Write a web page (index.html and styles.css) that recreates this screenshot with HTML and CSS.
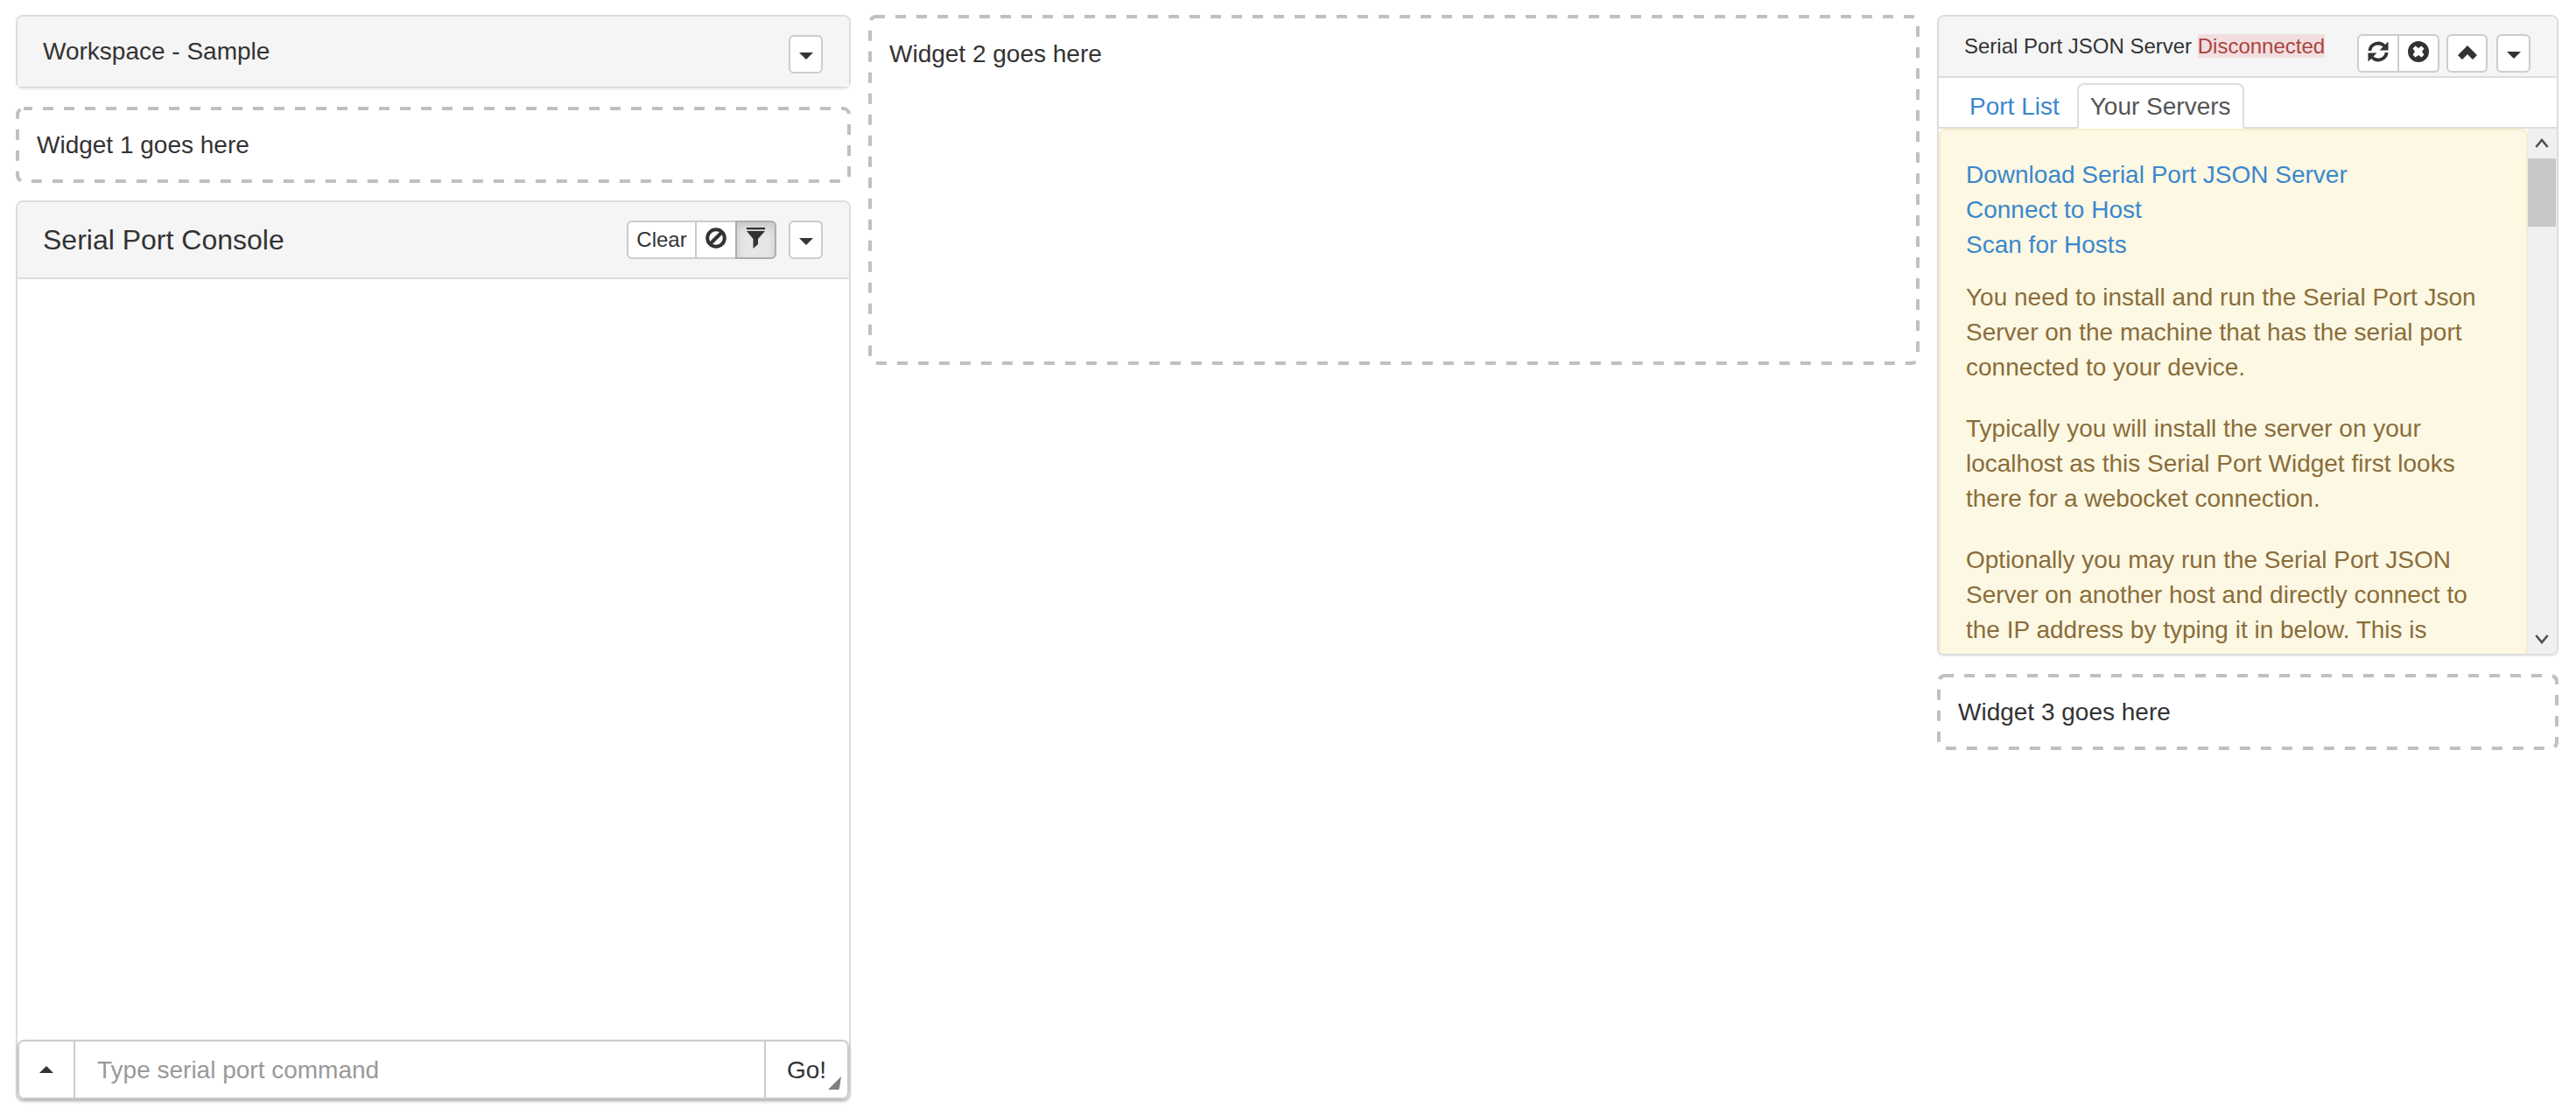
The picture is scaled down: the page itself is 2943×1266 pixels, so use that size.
FILE: index.html
```html
<!DOCTYPE html>
<html lang="en">
<head>
  <meta charset="UTF-8">
  <title>Workspace - Sample</title>
  <link rel="stylesheet" href="styles.css">
</head>
<body>
  <div class="layout">
    <!-- left column -->
    <div class="col">
      <div class="panel">
        <div class="panel-heading heading-workspace">
          <div class="panel-title">Workspace - Sample</div>
          <button class="btn btn-caret btn-low"><span class="caret"></span></button>
        </div>
      </div>
      <div class="placeholder placeholder-one">
        <svg class="dashes"><rect class="dash-rect" x="2" y="2" rx="7"/></svg>
        Widget 1 goes here
      </div>
      <div class="panel panel-console">
        <div class="panel-heading heading-console">
          <div class="panel-title title-console">Serial Port Console</div>
          <div class="btn-group">
            <button class="btn btn-clear">Clear</button>
            <button class="btn btn-icon">
              <svg class="icon" viewBox="0 0 24 24"><circle cx="12" cy="12" r="9.8" fill="none" stroke="#333" stroke-width="4"/><path d="M5.500 18.500 18.500 5.500" stroke="#333" stroke-width="4"/></svg>
            </button>
            <button class="btn btn-icon btn-active">
              <svg class="icon icon-filter" viewBox="0 0 21 24"><path d="M0 0h21v2.200H0zM0 4h21l-8 9v6l-5.500 5V13z" fill="#333"/></svg>
            </button>
          </div>
          <button class="btn btn-caret"><span class="caret"></span></button>
        </div>
        <div class="console-log"></div>
        <div class="input-group">
          <button class="addon addon-up"><span class="caret caret-up"></span></button>
          <div class="fake-input">Type serial port command</div>
          <button class="addon addon-go">Go!</button>
          <svg class="grip" viewBox="0 0 15 15"><path d="M15 0 13 13.500 12 15H0z" fill="#808080"/></svg>
        </div>
      </div>
    </div>

    <!-- middle column -->
    <div class="col">
      <div class="placeholder placeholder-mid">
        <svg class="dashes"><rect class="dash-rect" x="2" y="2" rx="7"/></svg>
        Widget 2 goes here
      </div>
    </div>

    <!-- right column -->
    <div class="col">
      <div class="panel">
        <div class="panel-heading heading-spjs">
          <div class="panel-title title-spjs">Serial Port JSON Server <span class="status">Disconnected</span></div>
          <div class="btn-group group-spjs">
            <button class="btn btn-icon btn-spjs">
              <svg class="icon" viewBox="0 0 24 24"><path d="M2.300 11A9.800 9.800 0 0 1 19 5.500" fill="none" stroke="#333" stroke-width="3.800"/><path d="M23.500 .5v10h-10z" fill="#333"/><path d="M21.700 13A9.800 9.800 0 0 1 5 18.500" fill="none" stroke="#333" stroke-width="3.800"/><path d="M.5 23.500v-10h10z" fill="#333"/></svg>
            </button>
            <button class="btn btn-icon btn-spjs">
              <svg class="icon" viewBox="0 0 24 24"><path fill-rule="evenodd" fill="#333" d="M12 0a12 12 0 1 1 0 24a12 12 0 1 1 0-24zM8.500 5.500 5.500 8.500 8 12 5.500 15.500 8.500 18.500 12 16 15.500 18.500 18.500 15.500 16 12 18.500 8.500 15.500 5.500 12 8z"/></svg>
            </button>
          </div>
          <button class="btn btn-icon btn-up">
            <svg class="icon icon-chevron" viewBox="0 0 22 16"><path d="M11 0 22 11l-5 5-6-6-6 6-5-5z" fill="#333"/></svg>
          </button>
          <button class="btn btn-caret"><span class="caret"></span></button>
        </div>
        <div class="tabs">
          <a class="tab">Port List</a>
          <a class="tab tab-active">Your Servers</a>
        </div>
        <div class="tab-body">
          <div class="alert">
            <div class="alert-links">
              <a>Download Serial Port JSON Server</a>
              <a>Connect to Host</a>
              <a>Scan for Hosts</a>
            </div>
            <p>You need to install and run the Serial Port Json Server on the machine that has the serial port connected to your device.</p>
            <p>Typically you will install the server on your localhost as this Serial Port Widget first looks there for a webocket connection.</p>
            <p>Optionally you may run the Serial Port JSON Server on another host and directly connect to the IP address by typing it in below. This is</p>
          </div>
          <div class="scrollbar">
            <svg class="scroll-arrow" viewBox="0 0 12 10"><path d="M1 8 6 2l5 6" fill="none" stroke="#505050" stroke-width="2"/></svg>
            <div class="scroll-track"><div class="scroll-thumb"></div></div>
            <svg class="scroll-arrow" viewBox="0 0 12 10"><path d="M1 2l5 6 5-6" fill="none" stroke="#505050" stroke-width="2"/></svg>
          </div>
        </div>
      </div>
      <div class="placeholder placeholder-three">
        <svg class="dashes"><rect class="dash-rect" x="2" y="2" rx="7"/></svg>
        Widget 3 goes here
      </div>
    </div>
  </div>
</body>
</html>
```

FILE: styles.css
```css
* {
  box-sizing: border-box;
}
html, body {
  height: 100%;
}
body {
  margin: 0;
  padding: 17px 18px 0;
  background-color: #fff;
  font-family: "Liberation Sans", Arial, sans-serif;
  font-size: 28px;
  line-height: 40px;
  color: #333;
  overflow: hidden;
}
button {
  font-family: inherit;
}
.layout {
  display: grid;
  grid-template-columns: 954px 1201px 710px;
  column-gap: 20px;
  align-items: start;
}
.col {
  display: flex;
  flex-direction: column;
  gap: 20px;
}

/* panels */
.panel {
  border: 2px solid #ddd;
  border-radius: 8px;
  background-color: #fff;
  box-shadow: 0 2px 2px rgba(0, 0, 0, 0.05);
}
.panel-heading {
  display: flex;
  align-items: center;
  background-color: #f5f5f5;
  border-radius: 6px 6px 0 0;
}
.panel-title {
  flex-grow: 1;
}
.heading-workspace {
  height: 80px;
  padding: 0 30px 0 29px;
}
.heading-console {
  height: 88px;
  padding: 0 30px 0 29px;
  border-bottom: 2px solid #ddd;
}
.title-console {
  font-size: 32px;
}
.heading-spjs {
  align-items: flex-start;
  height: 70px;
  padding: 20px 30px 0 29px;
  border-bottom: 2px solid #ddd;
}
.title-spjs {
  font-size: 24px;
  line-height: 32px;
  margin-top: -2px;
}
.status {
  background-color: #f2dede;
  color: #a94442;
}

/* buttons */
.btn {
  display: flex;
  align-items: center;
  justify-content: center;
  height: 44px;
  padding: 0;
  border: 2px solid #ccc;
  border-radius: 6px;
  background-color: #fff;
  color: #333;
  font-size: 24px;
}
.btn-group {
  display: flex;
  margin-right: 14px;
}
.group-spjs {
  margin-right: 8px;
}
.btn-group .btn {
  border-radius: 0;
  margin-left: -2px;
}
.btn-group .btn:first-child {
  border-radius: 6px 0 0 6px;
  margin-left: 0;
}
.btn-group .btn:last-child {
  border-radius: 0 6px 6px 0;
}
.btn-caret {
  width: 39px;
}
.btn-low {
  margin-top: 5px;
}
.btn-clear {
  width: 80px;
}
.btn-icon {
  width: 48px;
}
.btn-up {
  width: 47px;
  margin-right: 10px;
}
.btn-active {
  width: 47px;
  background-color: #e6e6e6;
  border-color: #adadad;
  box-shadow: inset 0 6px 10px rgba(0, 0, 0, 0.125);
}
.caret {
  display: block;
  width: 0;
  height: 0;
  margin-top: 4px;
  border-top: 8px solid #333;
  border-left: 8px solid transparent;
  border-right: 8px solid transparent;
}
.caret-up {
  margin-top: 0;
  border-top: 0;
  border-bottom: 8px solid #333;
}
.icon {
  display: block;
  width: 24px;
  height: 24px;
  margin-bottom: 4px;
}
.icon-filter {
  width: 21px;
}
.icon-chevron {
  width: 22px;
  height: 16px;
  margin-bottom: 2px;
}

/* placeholders, dashes drawn on top because the browser's own are too short */
.placeholder {
  position: relative;
  padding: 24px 24px 0;
}
.dashes {
  position: absolute;
  top: 0;
  left: 0;
  width: 100%;
  height: 100%;
  pointer-events: none;
}
.dash-rect {
  width: calc(100% - 4px);
  height: calc(100% - 4px);
  fill: none;
  stroke: #c0c0c0;
  stroke-width: 4;
  stroke-dasharray: 12 12;
  stroke-dashoffset: 2;
}
.placeholder-one {
  height: 87px;
  margin-top: 1px;
}
.placeholder-three {
  height: 87px;
  margin-top: 1px;
}
.placeholder-mid {
  height: 400px;
  padding-top: 25px;
}

/* console */
.panel-console {
  display: flex;
  flex-direction: column;
  height: 1029px;
}
.console-log {
  flex-grow: 1;
}
.input-group {
  position: relative;
  display: flex;
  height: 68px;
  border: 2px solid #ccc;
  border-radius: 8px;
  box-shadow: 0 2px 4px rgba(0, 0, 0, 0.2);
}
.addon {
  display: flex;
  align-items: center;
  justify-content: center;
  background-color: #fff;
  border: 0;
  padding: 0;
  font-size: 28px;
  color: #333;
}
.addon-up {
  width: 64px;
  border-right: 2px solid #ccc;
  border-radius: 6px 0 0 6px;
}
.addon-go {
  width: 95px;
  padding-top: 2px;
  border-left: 2px solid #ccc;
  border-radius: 0 6px 6px 0;
}
.fake-input {
  flex-grow: 1;
  padding: 13px 25px;
  color: #999;
}
.grip {
  position: absolute;
  right: 7px;
  bottom: 9px;
  width: 15px;
  height: 15px;
}

/* tabs */
.tabs {
  display: flex;
  gap: 5px;
  height: 58px;
  padding: 6px 0 0 20px;
  border-bottom: 2px solid #ddd;
}
.tab {
  height: 52px;
  padding: 0 13px;
  line-height: 50px;
  color: #3b87cd;
  border: 2px solid transparent;
  border-radius: 8px 8px 0 0;
}
.tab-active {
  color: #555;
  background-color: #fff;
  border-color: #ddd #ddd #fff;
}
.tab-body {
  display: flex;
  align-items: flex-start;
  height: 600px;
  border-radius: 0 0 6px 6px;
  overflow: hidden;
}
.alert {
  flex: 1 1 0;
  min-width: 0;
  height: 680px;
  padding: 31px 29px 0 29px;
  background-color: #fcf8e3;
  border: 2px solid #faebcc;
  border-radius: 8px;
  color: #8a6d3b;
}
.alert p {
  margin: 0 0 30px;
}
.alert-links {
  margin-bottom: 20px;
}
.alert-links a {
  display: block;
  line-height: 40px;
  color: #3b87cd;
}

/* fake scrollbar */
.scrollbar {
  display: flex;
  flex: 0 0 33px;
  flex-direction: column;
  align-self: stretch;
  padding-right: 1px;
  background-color: #f0f0f0;
}
.scroll-arrow {
  display: block;
  width: 100%;
  height: 34px;
  padding: 10px 8px;
}
.scroll-track {
  flex-grow: 1;
}
.scroll-thumb {
  height: 78px;
  background-color: #c8c8c8;
}
```
